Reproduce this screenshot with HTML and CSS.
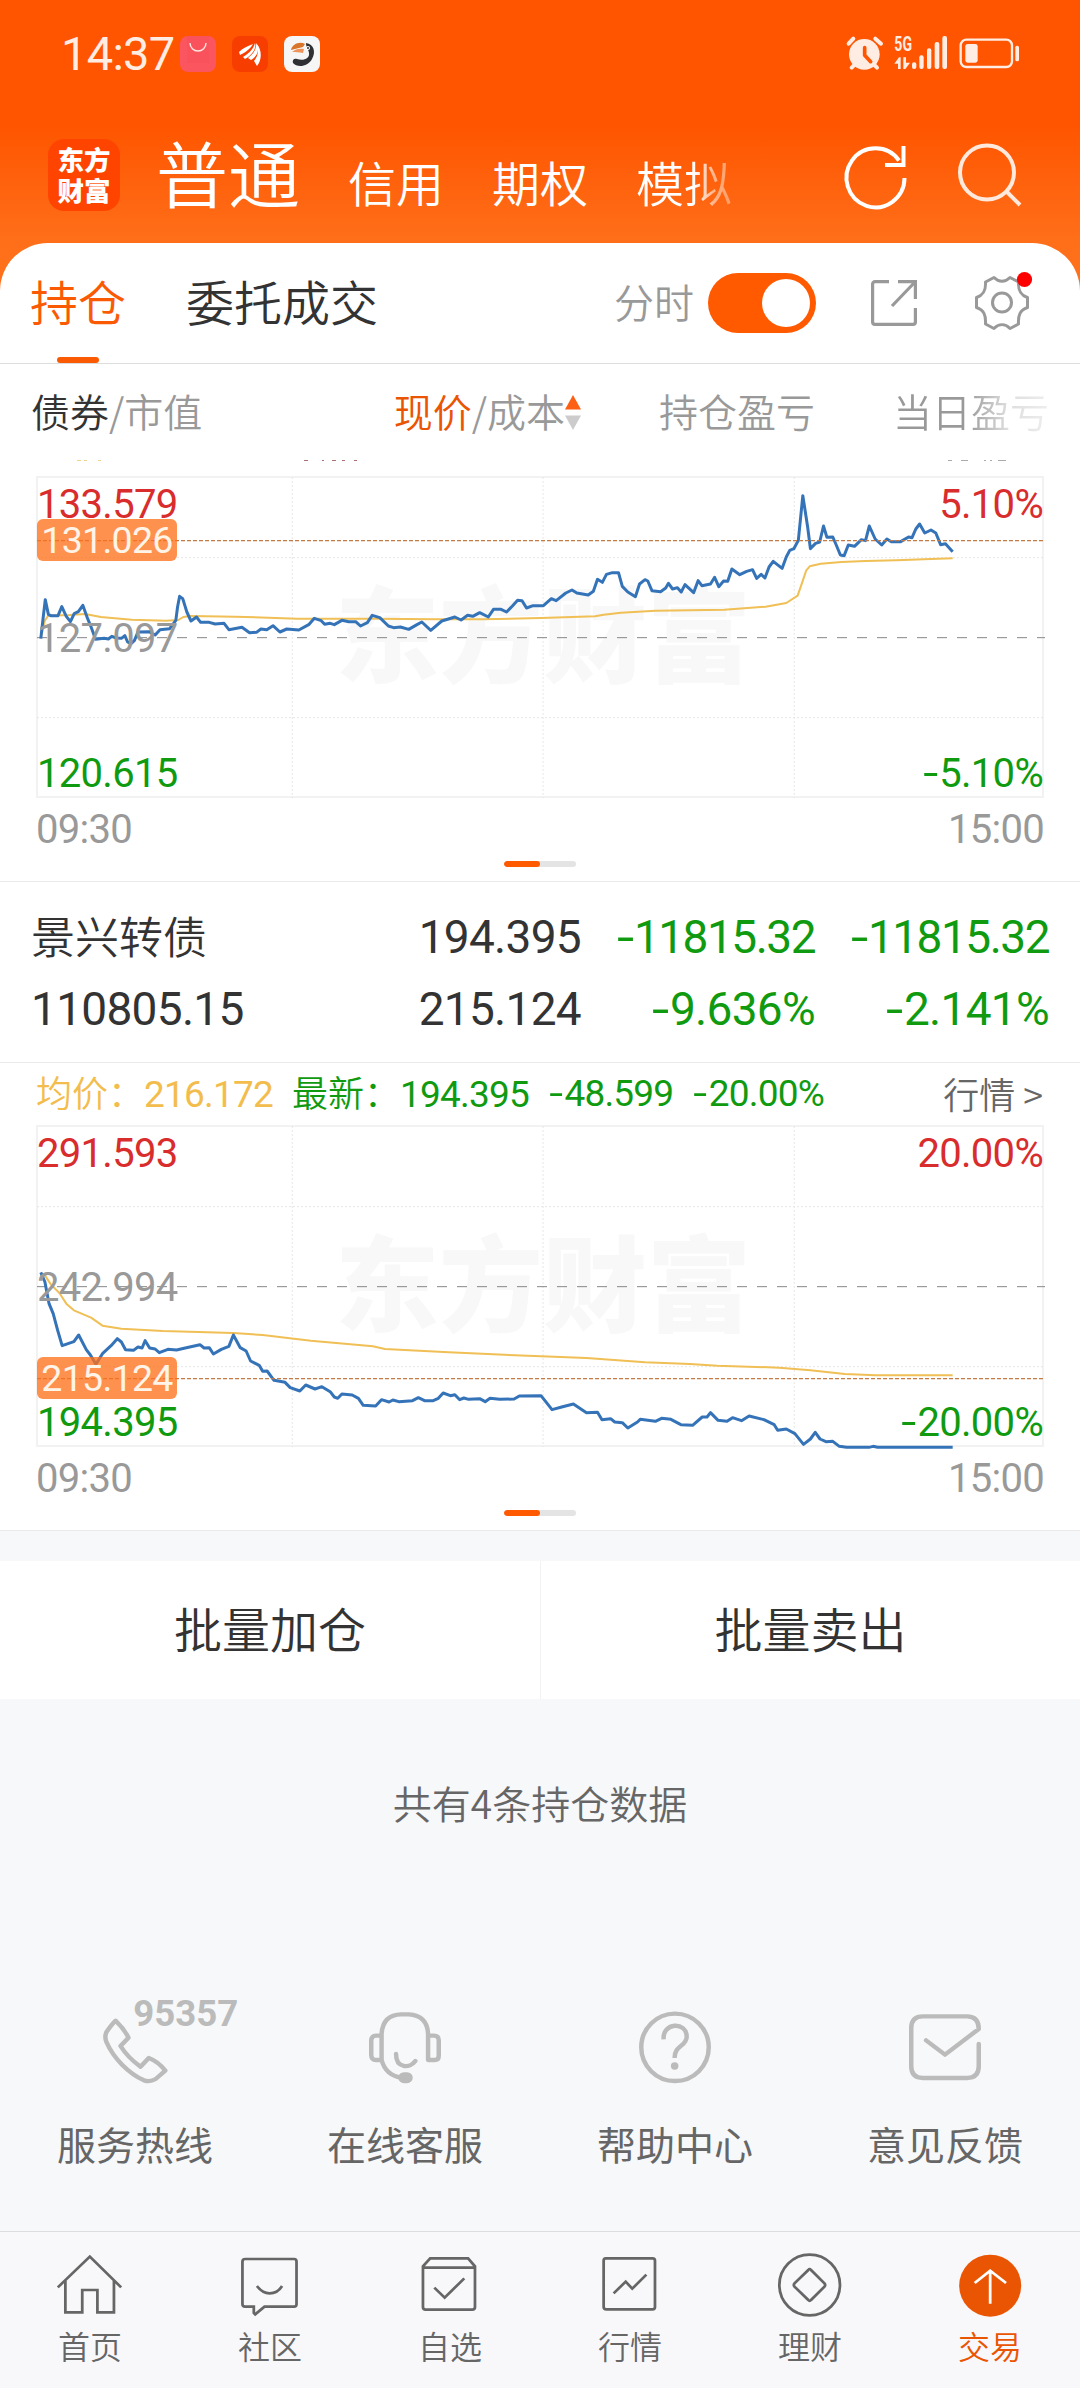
FILE: index.html
```html
<!DOCTYPE html>
<html lang="zh-CN">
<head>
<meta charset="utf-8">
<title>东方财富 交易</title>
<link rel="stylesheet" href="styles.css">
</head>
<body>
<header class="top">
  <div class="status">
    <span class="clock num">14:37</span>
    <div class="status-apps">
      <svg class="app-icon" viewBox="0 0 36 36"><rect width="36" height="36" rx="8" fill="#fb5560"/><rect x="7" width="22" height="27" fill="#f9505a" opacity=".6"/><path d="M10 7a8 8 0 0 0 16 0" fill="none" stroke="#ffe6e0" stroke-width="1.4"/></svg>
      <svg class="app-icon" viewBox="0 0 36 36"><rect width="36" height="36" rx="8" fill="#f73e00"/><path d="M7 16c4-4 9-6 14-8-2 4-8 9-13 11zM11 21c5-3 10-7 12-14 2 5-3 12-10 16zM16 22c5-4 9-9 8-15 4 5 2 13-5 17zM22 25c4-5 5-10 3-17 5 6 5 16 0 22z" fill="#fff"/></svg>
      <svg class="app-icon" viewBox="0 0 36 36"><rect width="36" height="36" rx="8" fill="#f6f6f6"/><path d="M7 14c1-6 9-9 14-6l-2 3z" fill="#d9752b"/><path d="M8 16c3-3 8-4 12-3l-1 4c-4-1-8-1-11-1z" fill="#f0935a"/><path d="M22 7c8 1 10 9 6 16-4 8-15 9-19 4-1-3 1-5 4-4 6 2 13 0 12-6 0-3-3-5-3-10z" fill="#303034"/><circle cx="24" cy="12" r="2" fill="#fff"/><circle cx="24" cy="12" r="1" fill="#303034"/></svg>
    </div>
    <svg class="status-right" viewBox="0 0 600 210" fill="#ffece2">
      <circle cx="73" cy="106" r="46"/>
      <path d="M26 74l14-15M106 59l17 15M35 146l12-12M111 146l-12-12" stroke="#ffece2" stroke-width="12" stroke-linecap="round"/>
      <path d="M74 86v23l18 19" fill="none" stroke="#ff5500" stroke-width="11" stroke-linecap="round" stroke-linejoin="round"/>
      <text x="163" y="95" class="net" textLength="53" lengthAdjust="spacingAndGlyphs">5G</text>
      <path d="M163 134l14-19h5v35h-8v-16zM190 115h8v16h12l-14 19h-6z"/>
      <rect x="216" y="130" width="13" height="20" rx="6"/><rect x="238" y="109" width="13" height="41" rx="6"/><rect x="261" y="88" width="13" height="62" rx="6"/><rect x="284" y="69" width="14" height="81" rx="6"/><rect x="307" y="51" width="14" height="99" rx="6"/>
      <rect x="362" y="62" width="154" height="82" rx="17" fill="none" stroke="#ffece2" stroke-width="7"/>
      <rect x="376" y="75" width="37" height="56" rx="7"/><rect x="526" y="80" width="11" height="47" rx="5"/>
    </svg>
  </div>
  <div class="nav">
    <div class="logo"><span>东方</span><span>财富</span></div>
    <nav class="nav-tabs"><b class="nav-main">普通</b><span>信用</span><span>期权</span><span class="fading">模拟</span></nav>
    <svg class="nav-refresh" viewBox="0 0 62 64" fill="none" stroke="#fff" stroke-width="4"><path d="M59.500 34A29 29.500 0 1 1 54 16.500"/><path d="M58.500 2v19H40"/></svg>
    <svg class="nav-search" viewBox="0 0 64 64" fill="none" stroke="#ffe9dc" stroke-width="4"><circle cx="29" cy="29.500" r="27"/><path d="M48 48l14 14"/></svg>
  </div>
</header>

<main class="panel">
  <div class="tabs">
    <span class="tab active">持仓</span><span class="tab">委托成交</span>
    <span class="switch-label">分时</span>
    <span class="switch"><i></i></span>
    <svg class="share" viewBox="0 0 46 46" fill="none" stroke="#999" stroke-width="3.200"><path d="M18 1.600H4A2.400 2.400 0 0 0 1.600 4v38A2.400 2.400 0 0 0 4 44.400h38a2.400 2.400 0 0 0 2.400-2.400V28M27 1.600h17.400V19M44 2L21 26"/></svg>
    <svg class="gear" viewBox="0 0 54 54" fill="none" stroke="#999" stroke-width="3"><path d="M19 1.500C24 6.500 30 6.500 35 1.500L43.500 6C43 14 45 19 52.500 21.500V31.500C45 34 43 39 43.500 48L35 52.500C30 47.500 24 47.500 19 52.500L10.500 48C11 39 9 34 1.500 31.500V21.500C9 19 11 14 10.500 6Z" stroke-linejoin="round"/><circle cx="27" cy="26.500" r="9.500"/><circle cx="49.500" cy="3.500" r="7.600" fill="#f00" stroke="none"/></svg>
  </div>

  <div class="cols head">
    <span><em class="dark">债券</em>/市值</span>
    <span class="price"><em class="hot">现价</em>/成本<svg class="sort" viewBox="0 0 16 35"><path d="M8 0l8 14.500H0z" fill="#fb6014"/><path d="M0 20.500h16L8 35z" fill="#ccc"/></svg></span>
    <span>持仓盈亏</span>
    <span class="fade-end">当日盈亏</span>
  </div>

  <div class="list">
    <section class="quote first">
      <svg class="info-edge" viewBox="0 0 1080 62"><path d="M77 46.500h4m3 0h3m11 0h3" stroke="#f0d28a"/><path d="M304 46.500h4m14 0h2m8 0h4m6 0h3m9 0h3" stroke="#a87070"/><path d="M948 46.500h4m9 0h7m16 0h2m4 0h2m6 0h8" stroke="#aaa"/></svg>
      <div class="chart">
        <span class="mark">东方财富</span>
        <svg class="plot" viewBox="105 350 2926 963" preserveAspectRatio="none">
          <g class="grid"><path d="M846 350V1313M1574 350V1313M2303 350V1313M105 592H3031M105 1072H3031"/></g>
          <path class="mid" d="M105 832H3031"/>
          <path class="avg-line" d="M116 832L128 780L138 766L200 764L245 761L290 770L380 778L480 781L515 779L530 770L550 767L680 769L860 775L1080 775L1260 777L1400 777L1568 773L1725 768L1750 763L1800 757L1900 751L2100 748L2220 739L2280 728L2313 706L2325 670L2338 630L2348 618L2380 610L2440 605L2510 602L2600 600L2700 596L2763 594"/>
          <path class="line" d="M116 835L122 780L129 718L138 762L145 766H166L177 739L190 768L202 784L213 760L225 754L238 735L252 775L262 800L275 837L300 834L312 836L322 828L335 833L350 834L360 826L368 845L378 850L388 840L398 815L430 814L448 824L462 808L490 805L508 780L513 740L519 708L528 715L540 755L552 782L568 770L580 786L605 786L622 791L648 789L662 808L700 801L722 817L742 816L755 806L772 808L790 796L810 815L830 806L865 809L895 792L910 774L930 781L940 792L956 789L968 793L990 780L1010 784L1030 784L1044 797L1064 787L1078 765L1100 772L1125 797L1140 802L1160 800L1184 807L1208 793L1222 785L1248 810L1280 782L1318 770L1336 779L1355 765L1370 768L1390 757L1415 770L1430 747L1452 747L1468 755L1485 737L1500 720L1513 721L1526 743L1545 736L1575 736L1598 715L1612 721L1640 698L1658 689L1672 698L1705 704L1720 693L1732 657L1746 666L1758 642L1775 637H1793L1804 678L1820 695L1842 709L1854 671L1870 658L1878 662L1890 691L1915 694L1930 683L1938 669L1950 686L1964 682L1975 695L1986 673L2011 697L2024 661L2035 676L2060 671L2072 651L2084 679L2098 662L2110 663L2122 626L2145 643L2165 633L2182 628L2194 654L2207 642L2218 653L2230 620L2242 603L2268 624L2280 590L2290 570L2302 565L2315 540L2328 406L2342 500L2350 565L2365 549L2377 545L2388 497L2398 531L2415 530L2425 554L2437 584L2448 586L2460 554L2478 558L2498 538L2510 541L2521 497L2538 536L2557 554L2572 536L2585 544L2612 544L2635 530L2645 532L2656 506L2667 491L2682 518L2700 509L2714 518L2728 553L2742 550L2763 574"/>
          <path class="cost" d="M105 541H3031"/>
        </svg>
        <span class="lab hi red num">133.579</span><span class="lab badge at-high num">131.026</span><span class="lab prev num">127.097</span><span class="lab lo green num">120.615</span>
        <span class="lab hi right red num">5.10%</span><span class="lab lo right green num"><i class="neg">-</i>5.10%</span>
      </div>
      <div class="times num"><span>09:30</span><span>15:00</span></div>
      <div class="pager"><i></i></div>
    </section>

    <section class="holding">
      <div class="cols"><span class="name">景兴转债</span><span class="num">194.395</span><span class="num green tight"><i class="neg">-</i>11815.32</span><span class="num green tight"><i class="neg">-</i>11815.32</span></div>
      <div class="cols"><span class="num">110805.15</span><span class="num">215.124</span><span class="num green"><i class="neg">-</i>9.636%</span><span class="num green"><i class="neg">-</i>2.141%</span></div>
    </section>

    <section class="quote">
      <div class="info"><span class="avg">均价：<span class="num">216.172</span></span><span class="green">最新：<span class="num">194.395</span></span><span class="green num"><i class="neg">-</i>48.599</span><span class="green num"><i class="neg">-</i>20.00%</span><span class="more">行情 &gt;</span></div>
      <div class="chart">
        <span class="mark">东方财富</span>
        <svg class="plot" viewBox="105 77 2926 963" preserveAspectRatio="none">
          <g class="grid"><path d="M846 77V1040M1574 77V1040M2303 77V1040M105 319H3031M105 799H3031"/></g>
          <path class="mid" d="M105 559H3031"/>
          <path class="avg-line" d="M116 520L128 525L145 552L170 578L190 610L212 630L262 652L295 676L350 685L470 692L675 698L760 704L900 721L1080 738L1115 746L1300 756L1568 768L1700 773L1870 786L2000 791L2080 796L2260 802L2350 810L2450 821L2540 825H2763"/>
          <path class="line" d="M116 516L128 545L140 610L152 640L165 690L178 736L212 724L226 704L248 748L260 764L276 792L295 760L320 736L338 715L350 725L362 748L385 750L398 740L410 743L419 721L432 743L448 746L460 757L485 747L510 749L545 741L578 733L590 743L605 742L617 761L640 747L662 738L675 704L695 742L712 752L725 782L750 795L760 813L773 812L793 840L825 846L840 862L868 872L885 854L912 866L932 859L956 874L968 890L978 894L990 881L1020 884L1038 894L1052 915L1088 917L1105 898L1127 905L1138 899L1155 904L1195 901L1212 892L1230 901L1255 901L1270 894L1284 878L1305 886L1318 883L1332 898L1344 893L1358 897L1390 895L1406 904L1420 894L1448 897L1490 896L1505 887L1568 886L1600 928L1628 920L1662 911L1700 937L1732 936L1745 958L1770 955L1782 965L1804 967L1820 983L1848 965L1856 957L1900 963L1918 954L1945 957L1974 973L2008 975L2036 950L2050 950L2060 937L2082 960L2108 963L2124 952L2150 961L2172 947L2215 958L2245 973L2255 990L2280 986L2305 1000L2330 1032L2350 1016L2364 996L2378 1016L2395 1024L2415 1023L2434 1038L2455 1041H2520L2532 1038L2545 1041H2763"/>
          <path class="cost" d="M105 835H3031"/>
        </svg>
        <span class="lab hi red num">291.593</span><span class="lab prev num">242.994</span><span class="lab badge at-low num">215.124</span><span class="lab lo green num">194.395</span>
        <span class="lab hi right red num">20.00%</span><span class="lab lo right green num"><i class="neg">-</i>20.00%</span>
      </div>
      <div class="times num"><span>09:30</span><span>15:00</span></div>
      <div class="pager"><i></i></div>
    </section>
  </div>
</main>

<div class="actions"><span>批量加仓</span><span>批量卖出</span></div>
<p class="count">共有4条持仓数据</p>

<section class="services">
  <div class="service"><svg class="service-icon" viewBox="0 110 784 270" preserveAspectRatio="none"><path d="M336 181C326 190 316 205 309 215Q303 230 309 245C330 295 375 340 418 360Q436 366 452 356L480 331C468 315 450 300 432 293L408 319C385 302 365 282 350 257L373 232C365 215 350 195 336 181Z"/><text x="387" y="198" class="hotline" textLength="305" lengthAdjust="spacingAndGlyphs">95357</text></svg><span>服务热线</span></div>
  <div class="service"><svg class="service-icon" viewBox="784 110 784 270" preserveAspectRatio="none"><path d="M1108 300V220Q1112 163 1165 162H1187Q1240 165 1243 220V299H1262Q1274 299 1274 286V240Q1274 226 1260 226H1243M1108 226H1092Q1078 226 1078 242V284Q1078 299 1092 299H1108Q1120 345 1165 352M1150 281C1150 325 1190 325 1206 302"/><rect x="1163" y="342" width="29" height="20" rx="10" fill="#bbb"/></svg><span>在线客服</span></div>
  <div class="service"><svg class="service-icon" viewBox="0 110 784 270" preserveAspectRatio="none"><ellipse cx="392" cy="261" rx="98" ry="101"/><path d="M359 237C355 185 426 183 426 229C426 258 390 255 391 293" stroke-linecap="butt"/><circle cx="391" cy="317" r="11" fill="#bbb" stroke="none"/></svg><span>帮助中心</span></div>
  <div class="service"><svg class="service-icon" viewBox="784 110 784 270" preserveAspectRatio="none"><path d="M1274 251V318Q1274 353 1240 353H1112Q1078 353 1078 318V203Q1078 168 1112 168H1240Q1274 168 1274 206L1176 283L1121 240"/></svg><span>意见反馈</span></div>
</section>

<footer class="tabbar">
  <div><svg viewBox="157 880 209 198" preserveAspectRatio="none"><path d="M168 983L261 891L352 983M190 963V1058H239V991H283V1058H331V963"/></svg><span>首页</span></div>
  <div><svg viewBox="679.5 880 209 198" preserveAspectRatio="none"><path d="M712 898H854Q861 898 861 906V1034Q861 1041 854 1041H768L741 1064L737 1060V1041H712Q704 1041 704 1034V906Q704 898 712 898ZM746 979Q762 1001 783 1001Q806 1001 819 979"/></svg><span>社区</span></div>
  <div><svg viewBox="1202 880 209 198" preserveAspectRatio="none"><path d="M1249 896H1359L1379 920V1042Q1379 1050 1371 1050H1236Q1228 1050 1228 1042V920ZM1228 924H1379M1261 984L1291 1014L1348 956"/></svg><span>自选</span></div>
  <div><svg viewBox="157 880 209 198" preserveAspectRatio="none"><path d="M191 896H327Q334 896 334 903V1042Q334 1049 327 1049H193Q185 1049 185 1042V903Q185 896 191 896ZM214 1001L249 966L268 987L309 945"/></svg><span>行情</span></div>
  <div><svg viewBox="679.5 880 209 198" preserveAspectRatio="none"><ellipse cx="783" cy="976" rx="88" ry="91"/><path d="M779 931Q783 926 787 931L826 971Q830 976 826 981L787 1021Q783 1026 779 1021L739 981Q735 976 739 971Z"/></svg><span>理财</span></div>
  <div class="on"><svg viewBox="1202 880 209 198" preserveAspectRatio="none"><ellipse class="disc" cx="1307" cy="978" rx="90" ry="93"/><path class="arrow" d="M1307 1032V934M1262 970L1307 933L1353 970"/></svg><span>交易</span></div>
</footer>
</body>
</html>
```

FILE: styles.css
```css
* { box-sizing: border-box; }
body {
  margin: 0;
  width: 1080px;
  height: 2388px;
  overflow: hidden;
  background: #f7f8fa;
  color: #333;
  font-family: "Noto Sans CJK SC", sans-serif;
  font-weight: 350;
  display: flex;
  flex-direction: column;
}
em, b, i { font-style: normal; font-weight: inherit; }
svg { display: block; flex: none; overflow: visible; }
.num { font-family: Roboto, "Noto Sans CJK SC", sans-serif; font-weight: 400; letter-spacing: -0.7px; }
.neg { display: inline-block; transform: scaleX(1.35); margin-right: 4px; }
.green { color: #109a10; }
.red { color: #d92c2c; }
.dark { color: #333; }
.hot { color: #ea5504; }

/* header */
.top {
  height: 303px;
  margin-bottom: -60px;
  flex: none;
  background: linear-gradient(#ff5500 0 125px, #ff6f1a 243px, #ff721e);
}
.status { height: 108px; padding: 0 40px 0 61px; display: flex; align-items: center; }
.clock { width: 119px; color: #ffece2; font-size: 47px; line-height: 108px; letter-spacing: -0.7px; }
.status-apps { display: flex; gap: 16px; flex: 1; }
.app-icon { width: 36px; height: 36px; }
.status-right { width: 200px; height: 70px; }
.net { font: 700 60px Roboto, sans-serif; }
.nav { height: 135px; padding-left: 48px; display: flex; align-items: flex-start; }
.logo {
  width: 72px; height: 72px; margin-top: 31px; padding-top: 4px;
  border-radius: 16px; background: #ff4400; color: #fff;
  display: flex; flex-direction: column; align-items: center;
  font-size: 26.500px; line-height: 31px; font-weight: 900;
}
.nav-tabs {
  flex: 1; display: flex; align-items: baseline; gap: 48px;
  padding-left: 36px; color: #fff; font-size: 48px; line-height: 125px;
}
.nav-main { font-size: 72px; }
.fading {
  background: linear-gradient(90deg, #fff 60%, #ffb78e 80%, #ff9a60);
  -webkit-background-clip: text; background-clip: text; color: transparent;
}
.nav-refresh { width: 62px; height: 64px; margin: 36px 51px 0 0; }
.nav-search { width: 64px; height: 64px; margin: 35px 58px 0 0; }

/* holdings panel */
.panel { flex: none; background: #fff; border-radius: 48px 48px 0 0; overflow: hidden; }
.tabs {
  height: 121px; padding-left: 30px; border-bottom: 1px solid #ddd;
  display: flex; align-items: center; font-size: 48px;
}
.tab { height: 120px; line-height: 114px; margin-right: 60px; }
.tab.active { width: 96px; color: #fb5a05; display: flex; flex-direction: column; align-items: center; }
.tab.active::after { content: ""; width: 42px; height: 6px; border-radius: 3px; background: #fb5a05; }
.switch-label { margin: 0 2px 4px auto; color: #999; font-size: 40px; }
.switch {
  width: 108px; height: 60px; margin-left: 12px; padding: 6px;
  border-radius: 30px; background: #ff5a00; display: flex; justify-content: flex-end;
}
.switch i { width: 48px; height: 48px; border-radius: 50%; background: #fff; }
.share { width: 46px; height: 46px; margin-left: 55px; }
.gear { width: 54px; height: 54px; margin: 0 51px 0 58px; }

.cols {
  display: grid; grid-template-columns: 250px 300px 234px 234px;
  padding: 0 31px; text-align: right; align-items: center;
}
.cols > :first-child { text-align: left; }
.head { height: 96px; padding-bottom: 4px; font-size: 39px; color: #999; }
.price { display: flex; justify-content: flex-end; align-items: center; }
.sort { width: 16px; height: 35px; margin-top: 4px; }
.fade-end {
  background: linear-gradient(90deg, #999 65%, #ddd 82%, #eee);
  -webkit-background-clip: text; background-clip: text; color: transparent;
}

.list { overflow: hidden; }
.quote { border-top: 1px solid #eaeaea; border-bottom: 1px solid #eaeaea; height: 469px; }
.quote.first { margin-top: -47px; }
.info-edge { width: 1080px; height: 62px; fill: none; stroke-width: 1; }
.info {
  height: 62px; padding: 0 37px 3px 36px; display: flex; align-items: center;
  gap: 22px; font-size: 36px; line-height: 58px;
}
.info .num { font-size: 37px; letter-spacing: -0.8px; }
.info > .num { padding-top: 2px; }
.avg { color: #f3bd4e; width: 234px; white-space: nowrap; }
.more { margin-left: auto; color: #666; }

.chart { position: relative; margin: 0 36px; height: 322px; border: 2px solid #f2f2f2; display: grid; place-items: center; }
.plot { position: absolute; inset: -1px; width: 1008px; height: 321px; fill: none; }
.plot path { vector-effect: non-scaling-stroke; }
.mark { font-size: 104px; font-weight: 900; color: #f8f8f8; line-height: 120px; margin: -14px 0 0 6px; }
.grid { stroke: #e6e6e6; stroke-width: 1; stroke-dasharray: 2 2; }
.mid { stroke: #888; stroke-width: 1; stroke-dasharray: 10 10; }
.avg-line { stroke: #f0bf55; stroke-width: 2; stroke-linejoin: round; }
.line { stroke: #3573b8; stroke-width: 3; stroke-linejoin: round; }
.cost { stroke: #c47a45; stroke-width: 1.4; stroke-dasharray: 4 2; }
.lab { position: absolute; left: -1px; height: 42px; font-size: 40px; line-height: 42px; letter-spacing: -0.7px; }
.hi { top: 6px; }
.lo { bottom: 1px; }
.prev { top: 140px; color: #999; }
.right { left: auto; right: -1px; }
.badge {
  left: -1px; width: 140px; border-radius: 6px; text-align: center;
  background: rgba(255, 112, 25, .77); color: #fff4e8; font-size: 37.500px;
}
.at-high { top: 41px; }
.at-low { top: 230px; }
.times { height: 63px; padding: 0 36px; display: flex; justify-content: space-between; font-size: 40px; line-height: 63px; color: #999; }
.pager { width: 72px; height: 6px; margin: 0 auto; border-radius: 3px; background: #e4e4e4; overflow: hidden; }
.pager i { display: block; width: 36px; height: 6px; border-radius: 3px; background: #ff5a00; }

.holding { height: 180px; padding-top: 19px; }
.holding .cols { height: 72px; font-size: 46px; line-height: 72px; }
.holding .name { font-size: 44px; padding-bottom: 5px; line-height: 66px; }
.holding .tight { letter-spacing: -1.5px; }

/* bulk actions */
.actions {
  margin-top: 30px; height: 138px; flex: none; background: #fff;
  display: grid; grid-template-columns: 1fr 1fr; text-align: center;
  font-size: 48px; line-height: 132px;
}
.actions span + span { border-left: 1px solid #f2f2f2; }
.count { margin: 73px 0 2px; text-align: center; font-size: 39px; line-height: 60px; color: #666; }

/* service links */
.services { display: grid; grid-template-columns: repeat(4, 1fr); margin-top: 163px; height: 235px; }
.service { text-align: center; font-size: 39px; line-height: 60px; font-weight: 400; color: #666; }
.service span { display: block; margin-top: 26px; }
.service-icon { width: 270px; height: 90px; fill: none; stroke: #bbb; stroke-width: 13; stroke-linecap: round; stroke-linejoin: round; }
.hotline { font: 700 112px Roboto, sans-serif; fill: #bbb; stroke: none; }

/* bottom tab bar */
.tabbar {
  margin-top: auto; height: 157px; flex: none; padding-top: 21px;
  border-top: 1px solid #ddd; background: #f8f8fa;
  display: grid; grid-template-columns: repeat(6, 1fr);
  text-align: center; font-size: 32px; line-height: 48px; color: #666;
}
.tabbar svg { width: 72px; height: 66px; margin: 0 auto; fill: none; stroke: #666; stroke-width: 8; }
.tabbar span { display: block; margin-top: 2px; }
.tabbar .on { color: #ea5504; }
.tabbar .disc { fill: #ea5504; stroke: none; }
.tabbar .arrow { stroke: #fff; }
```
